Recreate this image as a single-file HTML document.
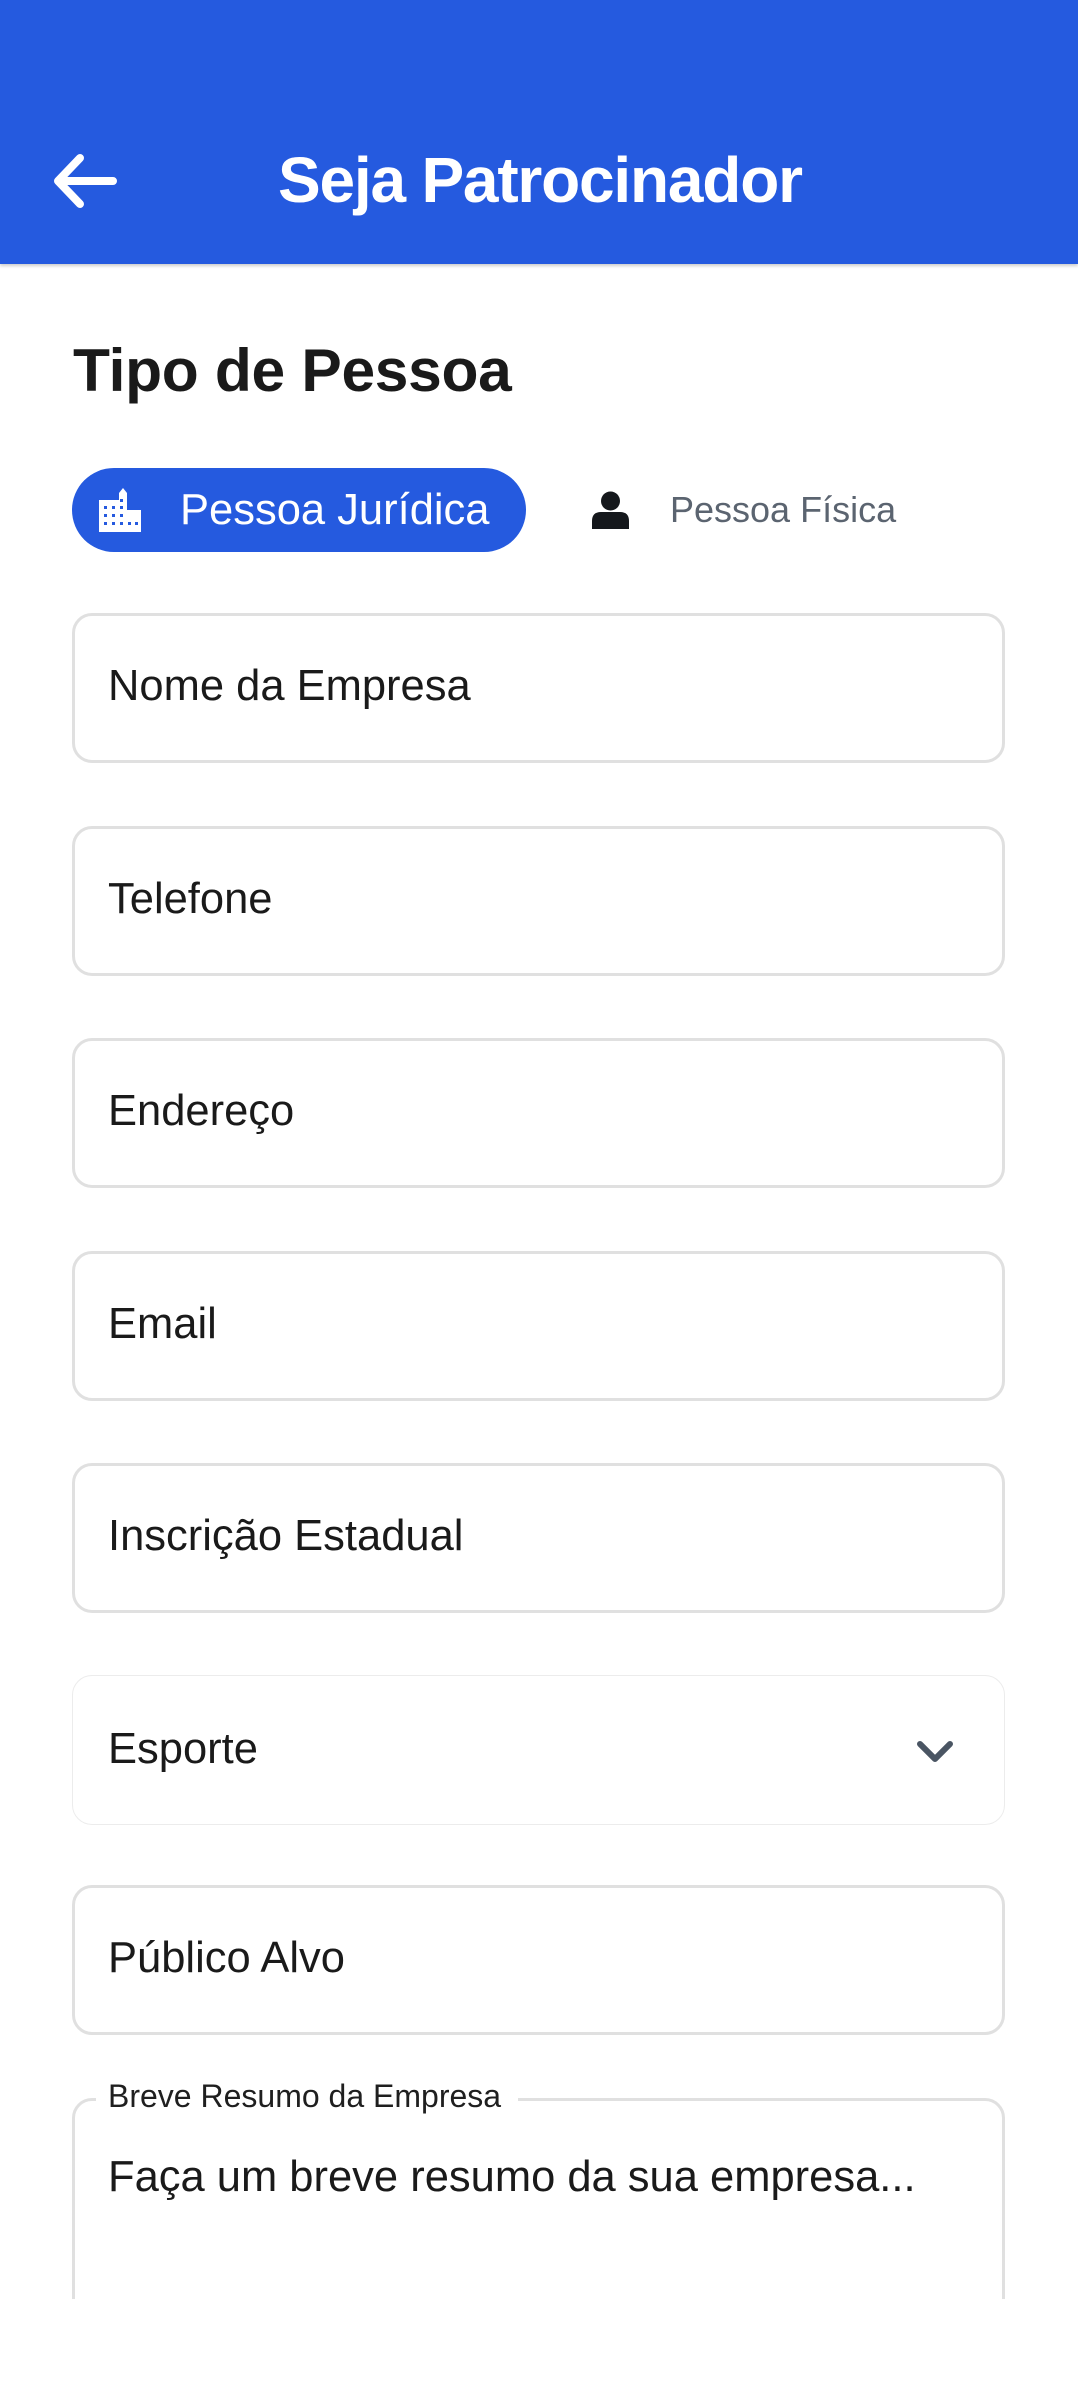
<!DOCTYPE html>
<html><head><meta charset="utf-8"><style>
*{margin:0;padding:0;box-sizing:border-box}
html,body{width:1078px;height:2398px;background:#fff;overflow:hidden;font-family:"Liberation Sans",sans-serif;position:relative}
.hdr{position:absolute;left:0;top:0;width:1078px;height:264px;background:#255ADF;box-shadow:0 2px 3px rgba(0,0,0,.2)}
.title{position:absolute;left:278px;top:140px;font-size:64px;font-weight:bold;color:#fff;letter-spacing:-1.2px;line-height:80px}
.h2{position:absolute;left:73px;top:335px;font-size:60.5px;font-weight:bold;color:#1a1a1a;line-height:70px;letter-spacing:-0.3px}
.pill{position:absolute;left:72px;top:468px;width:454px;height:84px;border-radius:42px;background:#255ADF}
.pill span{position:absolute;left:108px;top:17px;font-size:43.5px;color:#fff;line-height:50px}
.pf{position:absolute;left:670px;top:488px;font-size:36px;color:#5b6470;line-height:44px}
.inp{position:absolute;left:72px;width:933px;height:150px;border:3px solid #e0e0e0;border-radius:20px}
.inp span{position:absolute;left:33px;top:46px;font-size:43.5px;color:#1a1a1a;line-height:48px}
</style></head><body>
<div class="hdr">
<svg style="position:absolute;left:50px;top:148px" width="70" height="66" viewBox="0 0 70 66"><path d="M63 33H9M30 10L8 33L30 56" fill="none" stroke="#fff" stroke-width="8" stroke-linecap="round" stroke-linejoin="round"/></svg>
<div class="title">Seja Patrocinador</div>
</div>
<div class="h2">Tipo de Pessoa</div>
<div class="pill">
<svg style="position:absolute;left:27px;top:20px" width="42" height="44" viewBox="0 0 42 44"><path d="M0 12H20V5L24 0L28 5V22H42V44H0Z" fill="#fff"/><g fill="#255ADF"><rect x="5" y="18" width="3" height="3"/><rect x="13" y="18" width="3" height="3"/><rect x="21" y="11" width="3" height="3"/><rect x="5" y="26" width="3" height="3"/><rect x="13" y="26" width="3" height="3"/><rect x="21" y="26" width="3" height="3"/><rect x="5" y="34" width="3" height="3"/><rect x="13" y="34" width="3" height="3"/><rect x="21" y="34" width="3" height="3"/><rect x="29" y="34" width="3" height="3"/><rect x="36" y="34" width="3" height="3"/><rect x="21" y="18" width="3" height="3"/></g></svg>
<span>Pessoa Jurídica</span>
</div>
<svg style="position:absolute;left:592px;top:491px" width="37" height="38" viewBox="0 0 37 38"><circle cx="18.5" cy="10" r="9.5" fill="#15181c"/><path d="M0 38V30Q0 21 9 21H28Q37 21 37 30V38Z" fill="#15181c"/></svg>
<div class="pf">Pessoa Física</div>

<div class="inp" style="top:613px"><span>Nome da Empresa</span></div>
<div class="inp" style="top:826px"><span>Telefone</span></div>
<div class="inp" style="top:1038px"><span>Endereço</span></div>
<div class="inp" style="top:1251px"><span>Email</span></div>
<div class="inp" style="top:1463px"><span>Inscrição Estadual</span></div>
<div class="inp" style="top:1675px;border:1.5px solid #ececec"><span style="left:35px;top:49px">Esporte</span>
<svg style="position:absolute;left:842px;top:63px" width="40" height="26" viewBox="0 0 40 26"><path d="M5 5L20 20L35 5" fill="none" stroke="#4a5563" stroke-width="6" stroke-linecap="round" stroke-linejoin="round"/></svg></div>
<div class="inp" style="top:1885px"><span>Público Alvo</span></div>
<div class="inp" style="top:2098px;height:260px"><span style="top:52px">Faça um breve resumo da sua empresa...</span></div>
<div style="position:absolute;left:96px;top:2080px;width:422px;height:30px;background:#fff"></div>
<div style="position:absolute;left:108px;top:2078px;font-size:32px;color:#1f1f1f;line-height:36px">Breve Resumo da Empresa</div>
<div style="position:absolute;left:0;top:2299px;width:1078px;height:99px;background:#fff"></div>
</body></html>
